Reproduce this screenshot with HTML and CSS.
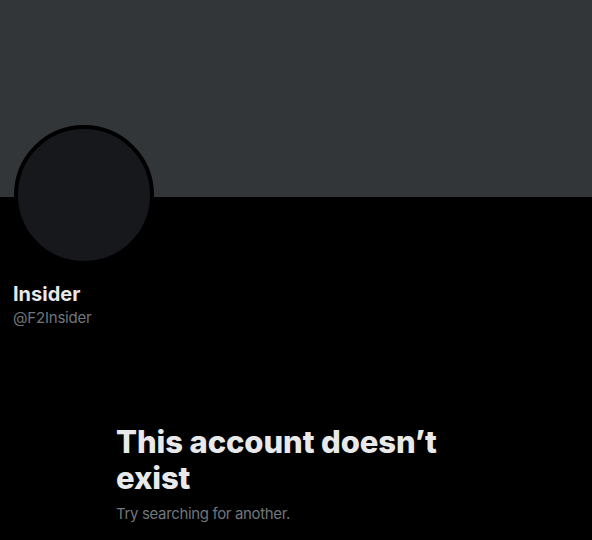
FILE: index.html
```html
<!DOCTYPE html>
<html>
<head>
<meta charset="utf-8">
<link rel="stylesheet" href="styles.css">
</head>
<body>
<div class="page">
  <div class="banner"></div>
  <div class="profile">
    <div class="avatar-row">
      <div class="avatar"></div>
    </div>
    <div class="names">
      <div class="name">Insider</div>
      <div class="handle">@F2Insider</div>
    </div>
  </div>
  <div class="empty">
    <h1 class="title">This account doesn’t exist</h1>
    <p class="sub">Try searching for another.</p>
  </div>
</div>
</body>
</html>
```
FILE: styles.css
```css
html, body {
  margin: 0;
  padding: 0;
  background: #000;
}
body {
  font-family: "Inter", "Noto Sans", "Liberation Sans", sans-serif;
  color: #e7e9ea;
}
.page {
  width: 592px;
  height: 540px;
  overflow: hidden;
  display: flex;
  flex-direction: column;
}
.banner {
  height: 197px;
  background: #333639;
  flex: none;
}
.profile {
  padding: 0 16px 0 13px;
  display: flex;
  flex-direction: column;
}
.avatar-row {
  margin-top: -72px;
  margin-left: 1px;
  margin-bottom: 20px;
}
.avatar {
  width: 132px;
  height: 132px;
  border-radius: 50%;
  background: #16181c;
  border: 4px solid #000;
}
.names {
  display: flex;
  flex-direction: column;
}
.name {
  font-size: 20px;
  font-weight: 700;
  line-height: 24px;
  margin-top: -3px;
}
.handle {
  font-size: 15px;
  line-height: 20px;
  margin-top: 2px;
  color: #71767b;
  letter-spacing: -0.2px;
}
.empty {
  width: 360px;
  margin: 96px 0 0 116px;
}
.title {
  margin: 0;
  font-size: 31px;
  font-weight: 800;
  line-height: 36px;
  letter-spacing: -0.1px;
}
.sub {
  margin: 8px 0 0;
  font-size: 15px;
  line-height: 20px;
  color: #71767b;
  letter-spacing: -0.35px;
}
```
